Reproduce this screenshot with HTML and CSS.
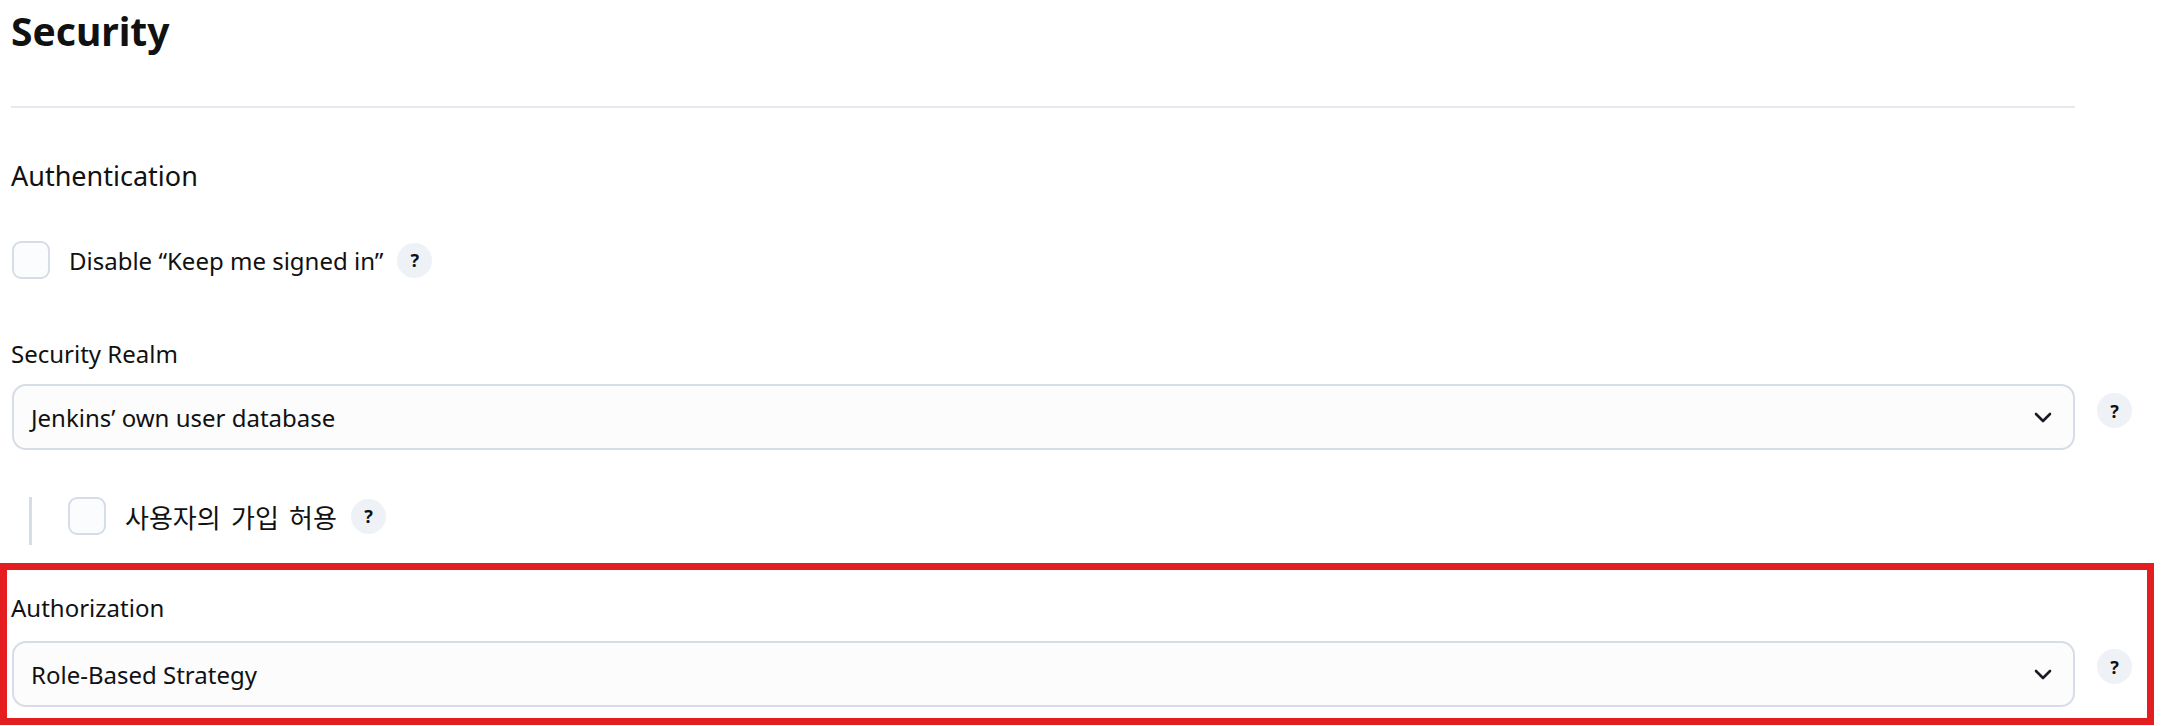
FILE: index.html
```html
<!DOCTYPE html>
<html lang="ko">
  <head>
    <meta charset="UTF-8" />
    <title>Security</title>
    <link rel="stylesheet" href="styles.css">
  </head>
  <body>
    <h1 class="page-title">Security</h1>
    <div class="divider"></div>

    <h2 class="section-title">Authentication</h2>

    <label class="checkbox-row">
      <span class="checkbox"></span>
      <span class="checkbox-label">Disable “Keep me signed in”</span>
      <span class="help">?</span>
    </label>

    <div class="form-item">
      <div class="form-label">Security Realm</div>
      <div class="select-row">
        <div class="select">
          <span>Jenkins’ own user database</span>
          <svg class="chevron" width="18" height="11" viewBox="0 0 18 11">
            <path d="M2 2l7 7 7-7" fill="none" stroke="#1b1b26" stroke-width="2.6" stroke-linecap="round" stroke-linejoin="round" />
          </svg>
        </div>
        <span class="help help-side">?</span>
      </div>
    </div>

    <div class="nested">
      <label class="checkbox-row">
        <span class="checkbox"></span>
        <span class="checkbox-label checkbox-label-ko">사용자의 가입 허용</span>
        <span class="help">?</span>
      </label>
    </div>

    <div class="highlight">
      <div class="form-label">Authorization</div>
      <div class="select-row">
        <div class="select">
          <span>Role-Based Strategy</span>
          <svg class="chevron" width="18" height="11" viewBox="0 0 18 11">
            <path d="M2 2l7 7 7-7" fill="none" stroke="#1b1b26" stroke-width="2.6" stroke-linecap="round" stroke-linejoin="round" />
          </svg>
        </div>
        <span class="help help-side">?</span>
      </div>
    </div>
  </body>
</html>
```

FILE: styles.css
```css
* {
  box-sizing: border-box;
}

body {
  margin: 0;
  padding: 0 93px 0 11px;
  font-family: "Noto Sans", "Noto Sans CJK KR", sans-serif;
  font-size: 24px;
  color: #111;
  background: #fff;
}

.page-title {
  margin: 0;
  font-size: 39px;
  font-weight: 700;
  line-height: 62px;
}

.divider {
  margin-top: 44px;
  height: 2px;
  background: #e6e9ef;
}

.section-title {
  margin: 50px 0 0;
  font-size: 27px;
  font-weight: 400;
  line-height: 36px;
}

.checkbox-row {
  display: flex;
  align-items: center;
  margin-top: 47px;
}

.checkbox {
  width: 38px;
  height: 38px;
  margin-left: 1px;
  border: 2px solid #d6dce8;
  border-radius: 9px;
  background: #fbfcfd;
}

.checkbox-label {
  margin-left: 19px;
}

.checkbox-label-ko {
  font-family: "Noto Sans CJK KR", sans-serif;
  font-size: 26px;
  word-spacing: 3px;
}

.help {
  display: flex;
  justify-content: center;
  align-items: center;
  width: 35px;
  height: 35px;
  margin-left: 14px;
  border-radius: 50%;
  background: #eef1f6;
  font-size: 18px;
  font-weight: 700;
  color: #111;
}

.form-item {
  margin-top: 60px;
}

.form-label {
  line-height: 30px;
}

.select-row {
  display: flex;
  margin-top: 15px;
  margin-right: -57px;
}

.select {
  flex: 1;
  display: flex;
  align-items: center;
  justify-content: space-between;
  height: 66px;
  margin-left: 1px;
  padding: 0 21px 0 17px;
  border: 2px solid #d6dce8;
  border-radius: 14px;
  background: #fcfcfd;
}

.help-side {
  flex-shrink: 0;
  margin-top: 9px;
  margin-left: 22px;
}

.nested {
  margin: 47px 0 0 18px;
  padding: 0 0 10px 36px;
  border-left: 3px solid #d6dce8;
}

.nested .checkbox-row {
  margin-top: 0;
}

.nested .checkbox {
  margin-left: 0;
}

.highlight {
  margin: 18px -79px 0 -11px;
  padding: 23px 72px 11px 4px;
  border: 7px solid #e41e20;
}

.highlight .select-row {
  margin-top: 18px;
}

.highlight .help-side {
  margin-top: 8px;
}
```
